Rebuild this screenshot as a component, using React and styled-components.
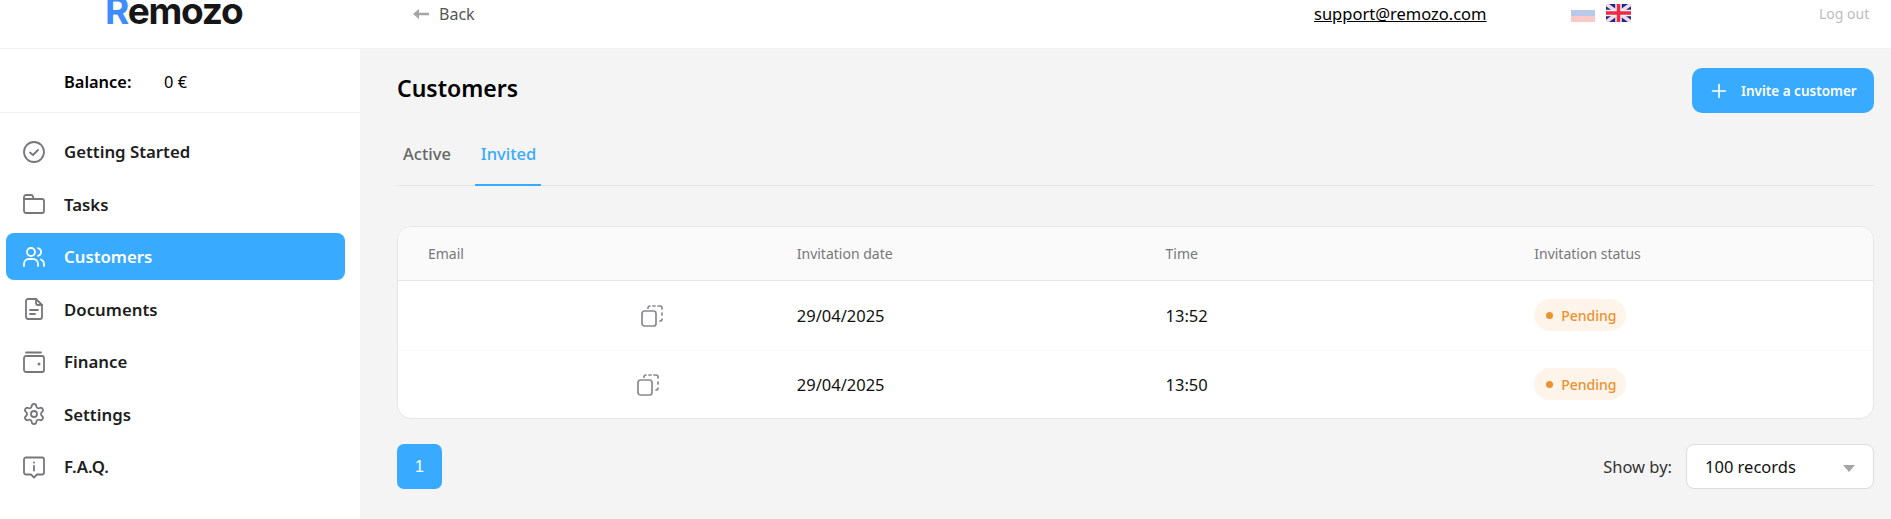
import React from "react";
import styled, { createGlobalStyle } from "styled-components";
import { Settings as SettingsIcon, Plus } from "lucide-react";

const GlobalStyle = createGlobalStyle`
  html, body {
    margin: 0;
    height: 100%;
    overflow: hidden;
  }
  body {
    font-family: "Noto Sans", "Open Sans", sans-serif;
    color: #000;
    background: #fff;
  }
  * {
    box-sizing: border-box;
  }
`;

/**
 * Icons
 */
const Svg = ({ children, size = 24 }) => (
  <svg
    width={size}
    height={size}
    viewBox="0 0 24 24"
    fill="none"
    stroke="currentColor"
    strokeWidth="1.8"
    strokeLinecap="round"
    strokeLinejoin="round"
  >
    {children}
  </svg>
);

const CheckIcon = () => (
  <Svg>
    <circle cx="12" cy="12" r="10" />
    <path d="M8 12.5l3 2.5 5-5" />
  </Svg>
);
const FolderIcon = () => (
  <Svg>
    <path d="M2 7V5a2 2 0 0 1 2-2h5a2 2 0 0 1 2 1.5L11.500 7H20a2 2 0 0 1 2 2v10a2 2 0 0 1-2 2H4a2 2 0 0 1-2-2z" />
    <path d="M2 7h9.500" />
  </Svg>
);
const UsersIcon = () => (
  <Svg>
    <circle cx="9" cy="7" r="4" />
    <path d="M2 21v-2a5 5 0 0 1 5-5h4a5 5 0 0 1 5 5v2" />
    <path d="M16 3.100a4 4 0 0 1 0 7.800" />
    <path d="M22 21v-2a5 5 0 0 0-3-4.500" />
  </Svg>
);
const DocIcon = () => (
  <Svg>
    <path d="M6 2h8l6 6v12a2 2 0 0 1-2 2H6a2 2 0 0 1-2-2V4a2 2 0 0 1 2-2z" />
    <path d="M14 2v4a2 2 0 0 0 2 2h4" />
    <path d="M8 13h8M8 17h5" />
  </Svg>
);
const WalletIcon = () => (
  <Svg>
    <path d="M4 2.500h15" />
    <rect x="2" y="6" width="20" height="16" rx="2" />
    <circle cx="17" cy="14" r="0.6" />
  </Svg>
);
const FaqIcon = () => (
  <Svg>
    <path d="M4 2.500h16a2 2 0 0 1 2 2v13a2 2 0 0 1-2 2h-5l-3 3-3-3H4a2 2 0 0 1-2-2v-13a2 2 0 0 1 2-2z" />
    <path d="M12 7.500v.2M12 11v4.500" />
  </Svg>
);
const BackArrow = () => (
  <svg width="16" height="12" viewBox="0 0 16 12" fill="#a5a5a5">
    <path d="M0 6l6-5v3.800h10v2.400H6V11z" />
  </svg>
);
const CopyIcon = () => (
  <svg width="22" height="22" viewBox="0 0 22 22" fill="none" stroke="#8a8a8e" strokeWidth="1.700" strokeLinecap="round">
    <rect x="1" y="6" width="14" height="15" rx="2.500" />
    <path d="M7 3.200V3a2 2 0 0 1 2-2M12 1h2M17 1h2a2 2 0 0 1 2 2v1M21 8v2M21 14a2 2 0 0 1-2 2" />
  </svg>
);
const RuFlag = () => (
  <svg width="24" height="18" viewBox="0 0 24 18">
    <rect y="6" width="24" height="6" fill="#b9c9ec" />
    <rect y="12" width="24" height="6" fill="#fcc9c9" />
  </svg>
);
const GbFlag = () => (
  <svg width="25" height="18" viewBox="0 0 25 18">
    <rect width="25" height="18" rx="2" fill="#1a2a8c" />
    <path d="M0 0l25 18M25 0L0 18" stroke="#f3dbe4" strokeWidth="3.500" />
    <path d="M12.500 0v18M0 9h25" stroke="#f7f0f3" strokeWidth="6.500" />
    <path d="M12.500 0v18M0 9h25" stroke="#ee2a46" strokeWidth="3.500" />
  </svg>
);

const navItems = [
  { label: "Getting Started", icon: <CheckIcon /> },
  { label: "Tasks", icon: <FolderIcon /> },
  { label: "Customers", icon: <UsersIcon />, active: true },
  { label: "Documents", icon: <DocIcon /> },
  { label: "Finance", icon: <WalletIcon /> },
  { label: "Settings", icon: <SettingsIcon size={24} strokeWidth={1.8} /> },
  { label: "F.A.Q.", icon: <FaqIcon /> },
];

const rows = [
  { gap: 213, date: "29/04/2025", time: "13:52" },
  { gap: 209, date: "29/04/2025", time: "13:50" },
];

export default function App() {
  return (
    <>
      <GlobalStyle />
      <Page>
        <Header>
          <LogoBox>
            <Logo>
              <LogoR>R</LogoR>emozo
            </Logo>
          </LogoBox>
          <BackLink>
            <BackArrow />
            <span>Back</span>
          </BackLink>
          <Support>support@remozo.com</Support>
          <Flags>
            <RuFlag />
            <GbFlag />
          </Flags>
          <LogOut>Log out</LogOut>
        </Header>
        <Body>
          <Sidebar>
            <Balance>
              <b>Balance:</b>
              <span>0 €</span>
            </Balance>
            <Nav>
              {navItems.map((item) => (
                <NavItem key={item.label} $active={item.active}>
                  <NavIcon $active={item.active}>{item.icon}</NavIcon>
                  {item.label}
                </NavItem>
              ))}
            </Nav>
          </Sidebar>
          <Main>
            <TitleRow>
              <Title>Customers</Title>
              <InviteButton>
                <Plus size={22} strokeWidth={1.800} />
                Invite a customer
              </InviteButton>
            </TitleRow>
            <Tabs>
              <Tab>Active</Tab>
              <Tab $active>Invited</Tab>
            </Tabs>
            <Card>
              <HeadRow>
                <HeadCell>Email</HeadCell>
                <HeadCell>Invitation date</HeadCell>
                <HeadCell>Time</HeadCell>
                <HeadCell>Invitation status</HeadCell>
              </HeadRow>
              {rows.map((row) => (
                <Row key={row.time}>
                  <Cell>
                    <EmailGap $width={row.gap} />
                    <CopyWrap>
                      <CopyIcon />
                    </CopyWrap>
                  </Cell>
                  <Cell>{row.date}</Cell>
                  <Cell>{row.time}</Cell>
                  <Cell>
                    <Badge>
                      <Dot />
                      Pending
                    </Badge>
                  </Cell>
                </Row>
              ))}
            </Card>
            <Footer>
              <PageButton>1</PageButton>
              <ShowBy>
                <ShowLabel>Show by:</ShowLabel>
                <Select>
                  100 records
                  <Caret />
                </Select>
              </ShowBy>
            </Footer>
          </Main>
        </Body>
      </Page>
    </>
  );
}

/**
 * Layout
 */
const Page = styled.div`
  height: 519px;
  display: flex;
  flex-direction: column;
`;
const Body = styled.div`
  flex: 1;
  display: flex;
  min-height: 0;
`;

// Header
const Header = styled.header`
  height: 49px;
  flex: none;
  display: flex;
  align-items: flex-start;
  overflow: hidden;
  background: #fff;
  border-bottom: 1px solid #f2f2f2;
`;
const LogoBox = styled.div`
  width: 413px;
  padding-left: 105px;
`;
const Logo = styled.div`
  margin-top: -12px;
  font-family: "Inter", sans-serif;
  font-size: 37px;
  line-height: 45px;
  font-weight: 700;
  letter-spacing: -1.200px;
  color: #161616;
`;
const LogoR = styled.span`
  color: #3f8cff;
`;
const BackLink = styled.div`
  width: 901px;
  height: 28px;
  display: flex;
  align-items: center;
  gap: 10px;
  font-size: 16px;
  color: #555;
`;
const Support = styled.a`
  width: 257px;
  height: 28px;
  display: block;
  font-size: 16.500px;
  line-height: 28px;
  text-decoration: underline;
  color: #000;
`;
const Flags = styled.div`
  width: 248px;
  padding-top: 4px;
  display: flex;
  gap: 11px;
`;
const LogOut = styled.div`
  font-size: 14px;
  line-height: 28px;
  color: #bdbdbd;
`;

// Sidebar
const Sidebar = styled.aside`
  width: 360px;
  flex: none;
  background: #fff;
`;
const Balance = styled.div`
  height: 64px;
  padding: 1px 0 0 64px;
  display: flex;
  align-items: center;
  font-size: 16.400px;
  border-bottom: 1px solid #f2f2f2;
  b {
    width: 100px;
    font-weight: 600;
  }
`;
const Nav = styled.nav`
  padding: 15px 15px 0 6px;
  display: flex;
  flex-direction: column;
  gap: 5.500px;
`;
const NavItem = styled.div`
  height: 47px;
  padding-left: 16px;
  display: flex;
  align-items: center;
  gap: 18px;
  border-radius: 8px;
  font-size: 16.800px;
  font-weight: 600;
  color: ${(p) => (p.$active ? "#fff" : "#1d1d21")};
  background: ${(p) => (p.$active ? "#38aaff" : "transparent")};
`;
const NavIcon = styled.span`
  width: 24px;
  height: 24px;
  display: flex;
  color: ${(p) => (p.$active ? "#fff" : "#77777b")};
`;

// Main
const Main = styled.main`
  flex: 1;
  min-width: 0;
  padding: 19px 17px 0 37px;
  background: #f4f4f4;
`;
const TitleRow = styled.div`
  height: 45px;
  display: flex;
  align-items: center;
  justify-content: space-between;
`;
const Title = styled.h1`
  margin: 0 0 6px;
  font-size: 23px;
  font-weight: 600;
  color: #000;
`;
const InviteButton = styled.button`
  width: 182px;
  height: 45px;
  padding: 0 0 0 16px;
  display: flex;
  align-items: center;
  gap: 11px;
  border: none;
  border-radius: 10px;
  font-family: inherit;
  font-size: 13.500px;
  font-weight: 600;
  color: #fff;
  background: #38aaff;
`;
const Tabs = styled.div`
  height: 60px;
  margin-top: 13px;
  display: flex;
  gap: 19px;
  border-bottom: 1px solid #e4e4e4;
`;
const Tab = styled.div`
  height: 60px;
  padding: 0 5px 4px 6px;
  display: flex;
  align-items: center;
  font-size: 16.500px;
  font-weight: 500;
  color: ${(p) => (p.$active ? "#38aaff" : "#666")};
  border-bottom: 2px solid ${(p) => (p.$active ? "#38aaff" : "transparent")};
`;
const Card = styled.div`
  height: 193px;
  margin-top: 40px;
  border: 1px solid #e6e6e6;
  border-radius: 14px;
  background: #fff;
  overflow: hidden;
`;
const HeadRow = styled.div`
  height: 54px;
  display: grid;
  grid-template-columns: repeat(4, 1fr);
  align-items: center;
  background: #fafafa;
  border-bottom: 1px solid #e6e6e6;
`;
const HeadCell = styled.div`
  padding-left: 30px;
  font-size: 14px;
  color: #77777b;
`;
const Row = styled.div`
  height: 68.500px;
  display: grid;
  grid-template-columns: repeat(4, 1fr);
  align-items: center;
  & + & {
    border-top: 1px solid #f8f8f8;
  }
`;
const Cell = styled.div`
  padding-left: 30px;
  display: flex;
  align-items: center;
  font-size: 16.500px;
  color: #111;
`;
const EmailGap = styled.span`
  width: ${(p) => p.$width}px;
`;
const CopyWrap = styled.span`
  display: flex;
  padding-top: 2px;
`;
const Badge = styled.span`
  height: 32px;
  padding: 0 9px 0 12px;
  display: inline-flex;
  align-items: center;
  gap: 8px;
  border-radius: 16px;
  font-size: 14px;
  font-weight: 500;
  color: #ec9130;
  background: #fef4ea;
`;
const Dot = styled.span`
  width: 7px;
  height: 7px;
  border-radius: 50%;
  background: #ec9130;
`;

// Footer
const Footer = styled.div`
  margin-top: 25px;
  display: flex;
  align-items: center;
  justify-content: space-between;
`;
const PageButton = styled.button`
  width: 45px;
  height: 45px;
  padding: 0;
  border: none;
  border-radius: 7px;
  font-family: "Liberation Sans", sans-serif;
  font-size: 16px;
  color: #fff;
  background: #38aaff;
`;
const ShowBy = styled.div`
  display: flex;
  align-items: center;
  gap: 14px;
`;
const ShowLabel = styled.span`
  font-size: 16.500px;
  color: #333;
`;
const Select = styled.div`
  width: 188px;
  height: 45px;
  padding: 0 18px 0 18px;
  display: flex;
  align-items: center;
  justify-content: space-between;
  border: 1px solid #dcdcdc;
  border-radius: 8px;
  font-size: 16.500px;
  color: #111;
  background: #fff;
`;
const Caret = styled.span`
  width: 0;
  height: 0;
  margin-top: 3px;
  border-left: 6px solid transparent;
  border-right: 6px solid transparent;
  border-top: 7px solid #a5a5a5;
`;
